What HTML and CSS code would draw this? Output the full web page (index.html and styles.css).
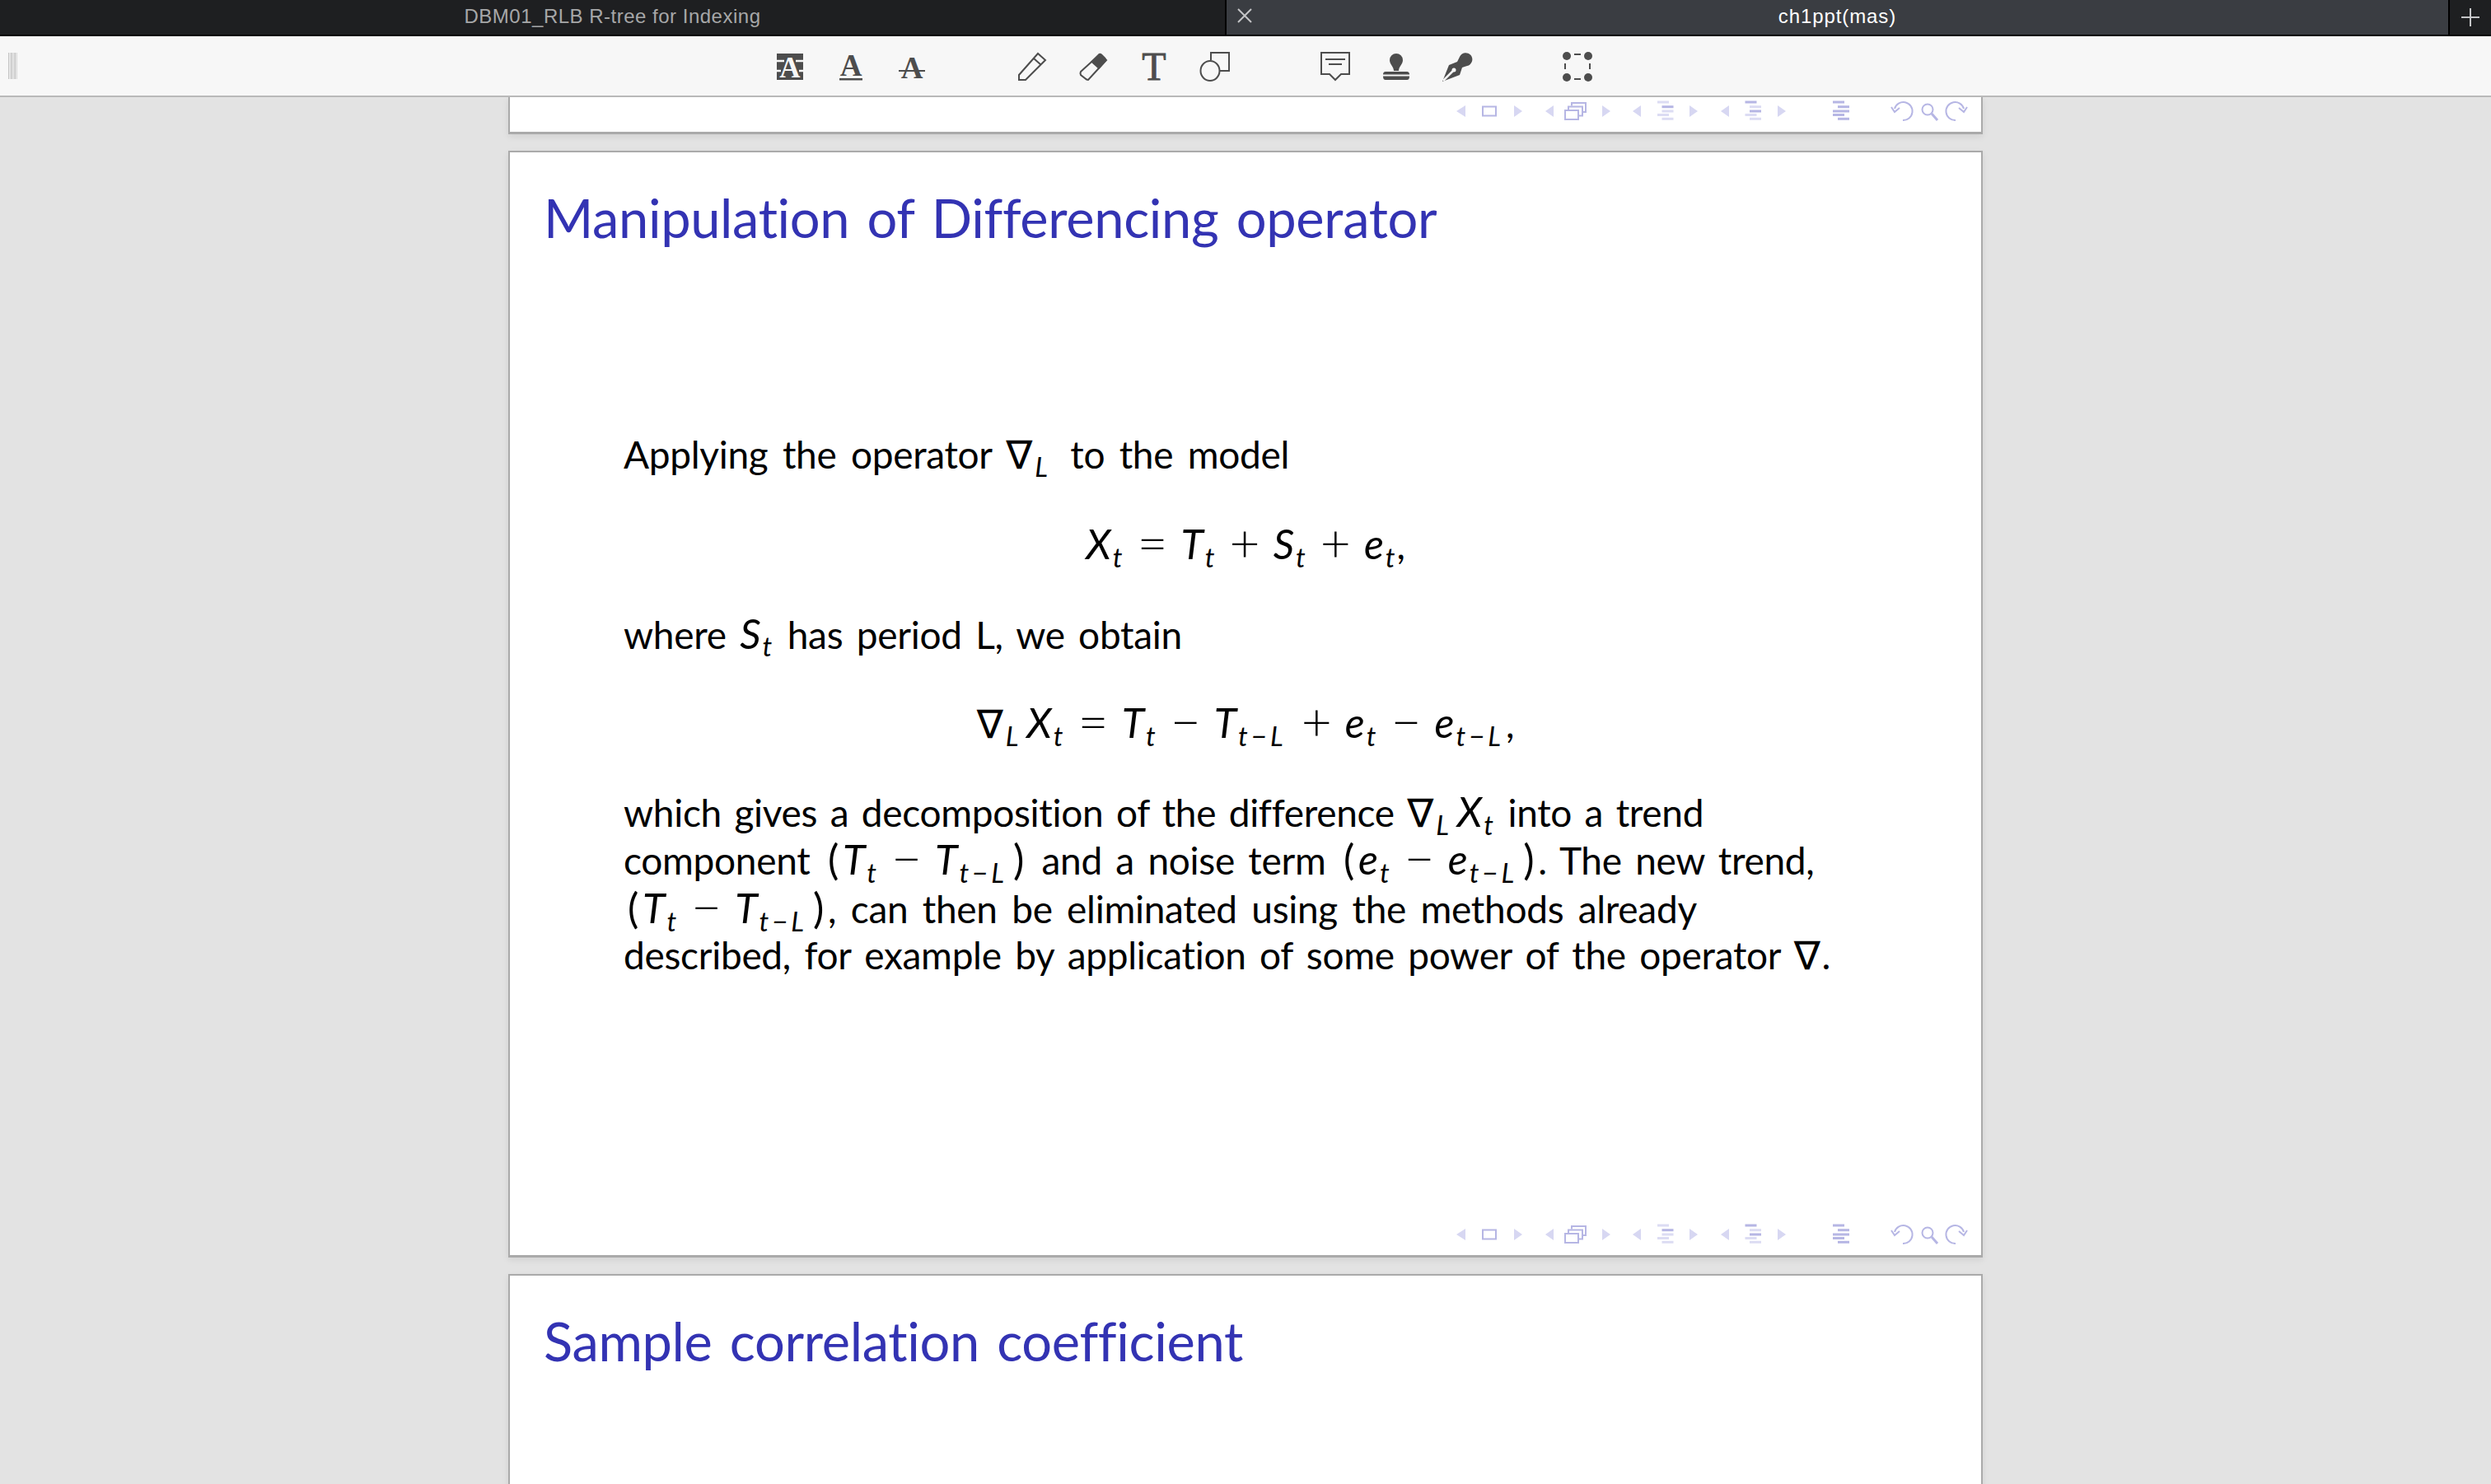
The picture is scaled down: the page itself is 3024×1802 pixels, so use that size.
FILE: index.html
```html
<!DOCTYPE html>
<html lang="en">
<head>
<meta charset="utf-8">
<title>ch1ppt(mas)</title>
<link rel="stylesheet" href="styles.css">
</head>
<body>
<svg class="defs" width="0" height="0" aria-hidden="true">
  <symbol id="nav" viewBox="0 0 630 30">
    <g class="tri">
      <polygon points="14,8 3,15 14,22"/><polygon points="73,8 83,15 73,22"/>
      <polygon points="121,8 111,15 121,22"/><polygon points="180,8 190,15 180,22"/>
      <polygon points="227,8 217,15 227,22"/><polygon points="286,8 296,15 286,22"/>
      <polygon points="334,8 324,15 334,22"/><polygon points="393,8 403,15 393,22"/>
    </g>
    <g class="ln">
      <rect x="35" y="9.5" width="16" height="11"/>
      <rect x="135" y="14" width="16" height="11"/>
      <path d="M139 13V9.5H156V20.5H152"/>
      <path d="M143 8.500V5H160V16H157"/>
    </g>
    <g class="bl">
      <rect x="247" y="2.500" width="14" height="3"/><rect x="247" y="18" width="14" height="3"/>
      <rect x="252.500" y="13.500" width="14" height="3"/><rect x="252.500" y="22.800" width="14" height="3"/>
      <rect x="353.500" y="18" width="14" height="3"/><rect x="359" y="8.200" width="14" height="3"/><rect x="359" y="22.800" width="14" height="3"/>
    </g>
    <g class="bd">
      <rect x="252.500" y="8.200" width="14" height="3"/>
      <rect x="353.500" y="2.500" width="14" height="3"/><rect x="359" y="13.500" width="14" height="3"/>
      <rect x="460" y="2.500" width="14" height="3"/><rect x="466" y="8.200" width="14" height="3"/><rect x="460" y="13.500" width="20" height="3"/><rect x="460" y="18" width="14" height="3"/><rect x="466" y="22.800" width="14" height="3"/>
    </g>
    <g class="ln">
      <path d="M535 12A11 11 0 1 1 545 26M531 10L535 16L541 11"/>
      <circle cx="575" cy="13" r="6.500"/><path class="thick" d="M580 18L587 26"/>
      <path d="M619 12A11 11 0 1 0 609 26M623 10L619 16L613 11"/>
    </g>
  </symbol>
</svg>

<header class="tabs">
  <div class="tab tab-off"><span>DBM01_RLB R-tree for Indexing</span></div>
  <div class="tab tab-on">
    <svg class="tab-close" width="18" height="18" viewBox="0 0 18 18"><path d="M1 1L17 17M17 1L1 17"/></svg>
    <span>ch1ppt(mas)</span>
  </div>
  <div class="tab-add">
    <svg width="24" height="24" viewBox="0 0 24 24"><path d="M12 1V23M1 12H23"/></svg>
  </div>
</header>

<nav class="toolbar">
  <div class="grip"></div>
  <div class="tool-group">
    <svg class="tool" viewBox="0 0 40 40">
      <rect class="f" x="4" y="4" width="32" height="32"/>
      <text class="glyph-a inv" x="20" y="33" font-size="35">A</text>
      <path class="w" d="M4 13H13M4 25H9M27 13H36M31 25H36"/>
    </svg>
    <svg class="tool" viewBox="0 0 40 40">
      <text class="glyph-a" x="20" y="31" font-size="37">A</text>
      <rect class="f" x="6" y="34" width="28" height="2.500"/>
    </svg>
    <svg class="tool" viewBox="0 0 40 40">
      <text class="glyph-a" x="20" y="34" font-size="37">A</text>
      <rect class="f" x="4" y="24" width="32" height="2"/>
    </svg>
  </div>
  <div class="tool-group">
    <svg class="tool" viewBox="0 0 40 40">
      <path class="s" d="M4 36V30L27 4L36 12L12 36ZM22 10L31 18"/>
    </svg>
    <svg class="tool" viewBox="0 0 40 40">
      <path class="s" d="M5 26L28 5L36 12L14 36Q12 36 10 34L5 30Q4 28 5 26Z"/>
      <path class="f" d="M17 14L27 4Q29 3 31 5L35 9Q37 11 36 13L27 23Z"/>
    </svg>
    <svg class="tool" viewBox="0 0 40 40">
      <text class="glyph-t" x="20" y="36" font-size="48">T</text>
    </svg>
    <svg class="tool" viewBox="0 0 40 40">
      <path class="s" d="M15 12V3H37V25H26"/>
      <ellipse class="s" cx="14" cy="25" rx="11.500" ry="12"/>
    </svg>
  </div>
  <div class="tool-group">
    <svg class="tool" viewBox="0 0 40 40">
      <path class="s" d="M3 3H37V29H27L20 36L13 29H3ZM8 11H32M12 17H28"/>
    </svg>
    <svg class="tool" viewBox="0 0 40 40">
      <path class="f" d="M20 4A8 8 0 0 1 28 12C28 17 23 20 23 25H17C17 20 12 17 12 12A8 8 0 0 1 20 4Z"/>
      <path class="f" d="M7 26H33Q36 26 36 29.500H4Q4 26 7 26ZM4 31.500H36Q36 36 33 36H7Q4 36 4 31.500Z"/>
    </svg>
    <svg class="tool" viewBox="0 0 40 40">
      <path class="f" d="M2 38L10 18L20 14L23 8A8 8 0 1 1 32 19L26 21L23 30Z"/>
      <circle class="hole" cx="16" cy="24" r="2.500"/>
      <path class="w" d="M3 37L15 25"/>
    </svg>
  </div>
  <div class="tool-group">
    <svg class="tool" viewBox="0 0 40 40">
      <circle class="f" cx="7" cy="7" r="5"/><circle class="f" cx="33" cy="7" r="5"/>
      <circle class="f" cx="7" cy="33" r="5"/><circle class="f" cx="33" cy="33" r="5"/>
      <path class="s" d="M16 5H24M16 35H24M5 16V23M35 16V23"/>
    </svg>
  </div>
</nav>

<main class="viewer">
  <section class="slide slide-tail">
    <svg class="beamer-nav"><use href="#nav"/></svg>
  </section>

  <section class="slide">
    <h1 class="slide-title">Manipulation of Differencing operator</h1>
    <div class="slide-body">
      <p class="line ws-6">Applying the operator <span class="nabla">∇</span><sub class="i ll">L</sub> to the model</p>
      <p class="line eq"><span class="i">X</span><sub class="i">t</sub><span class="op">=</span><span class="i">T</span><sub class="i">t</sub><span class="op">+</span><span class="i">S</span><sub class="i">t</sub><span class="op">+</span><span class="i">e</span><sub class="i">t</sub>,</p>
      <p class="line">where <span class="i">S</span><sub class="i">t</sub> has period L, we obtain</p>
      <p class="line eq"><span class="nabla">∇</span><sub class="i ll">L</sub><span class="i">X</span><sub class="i">t</sub><span class="op">=</span><span class="i">T</span><sub class="i">t</sub><span class="op">−</span><span class="i">T</span><sub class="i sl">t−L</sub><span class="op">+</span><span class="i">e</span><sub class="i">t</sub><span class="op">−</span><span class="i">e</span><sub class="i sl">t−L</sub>,</p>
      <div class="para">
        <p class="line ws-4">which gives a decomposition of the difference <span class="nabla">∇</span><sub class="i ll">L</sub><span class="i">X</span><sub class="i">t</sub> into a trend</p>
        <p class="line">component <span class="pa">(</span><span class="i">T</span><sub class="i">t</sub><span class="op">−</span><span class="i">T</span><sub class="i sl">t−L</sub><span class="pa">)</span> and a noise term <span class="pa">(</span><span class="i">e</span><sub class="i">t</sub><span class="op">−</span><span class="i">e</span><sub class="i sl">t−L</sub><span class="pa">)</span>. The new trend,</p>
        <p class="line ws-6"><span class="pa">(</span><span class="i">T</span><sub class="i">t</sub><span class="op">−</span><span class="i">T</span><sub class="i sl">t−L</sub><span class="pa">)</span>, can then be eliminated using the methods already</p>
        <p class="line">described, for example by application of some power of the operator <span class="nabla">∇</span>.</p>
      </div>
    </div>
    <svg class="beamer-nav"><use href="#nav"/></svg>
  </section>

  <section class="slide slide-head">
    <h1 class="slide-title">Sample correlation coefficient</h1>
  </section>
</main>
</body>
</html>
```
FILE: styles.css
```css
* { box-sizing: border-box; }
html, body { margin: 0; height: 100%; }
body {
  display: flex;
  flex-direction: column;
  height: 1802px;
  overflow: hidden;
  background: #e3e3e3;
  font-family: "Lato", "DejaVu Sans", sans-serif;
  font-variant-ligatures: none;
}
.defs { display: block; height: 0; }

/* tabs */
.tabs {
  display: flex;
  height: 44px;
  flex: none;
  background: #000;
  padding-bottom: 2px;
  font-family: "Liberation Sans", sans-serif;
  font-size: 24px;
}
.tab {
  display: flex;
  align-items: center;
  justify-content: center;
  width: 1487px;
  padding-bottom: 2px;
  position: relative;
}
.tab-off { background: #1e1f21; color: #a6a7a8; margin-right: 2px; letter-spacing: .5px; }
.tab-on { background: #3a3d42; color: #fff; width: 1483px; letter-spacing: .9px; }
.tab-close {
  position: absolute;
  left: 13px;
  top: 10px;
  stroke: #c4c5c7;
  stroke-width: 2;
  fill: none;
}
.tab-add {
  flex: 1;
  margin-left: 2px;
  background: #1e1f21;
  display: flex;
  align-items: center;
  justify-content: center;
  stroke: #c4c5c7;
  stroke-width: 2;
  fill: none;
}

/* toolbar */
.toolbar {
  display: flex;
  align-items: center;
  gap: 72px;
  flex: none;
  height: 74px;
  padding-top: 2px;
  background: #f7f7f7;
  border-bottom: 2px solid #b9b9b9;
  position: relative;
  padding-left: 922px;
}
.grip {
  position: absolute;
  left: 10px;
  top: 20px;
  width: 11px;
  height: 32px;
  background: repeating-linear-gradient(90deg, #c4c4c4 0 1px, #ececec 1px 2px, #dadada 2px 4px);
}
.tool-group { display: flex; }
.tool {
  width: 74px;
  height: 40px;
  flex: none;
  overflow: visible;
}
.tool .f { fill: #4d4d4d; }
.tool .s { fill: none; stroke: #4d4d4d; stroke-width: 2; }
.tool .w { fill: none; stroke: #f7f7f7; stroke-width: 2.500; }
.tool .hole { fill: #f7f7f7; }
.glyph-a {
  font-family: "Liberation Serif", serif;
  font-weight: 700;
  text-anchor: middle;
  fill: #4d4d4d;
}
.glyph-a.inv { fill: #f7f7f7; }
.glyph-t {
  font-family: "Liberation Serif", serif;
  text-anchor: middle;
  fill: #4d4d4d;
  stroke: #4d4d4d;
  stroke-width: .8;
}

/* slides */
.viewer {
  flex: 1;
  min-height: 0;
  overflow: hidden;
  display: flex;
  flex-direction: column;
  align-items: center;
  gap: 20px;
}
.slide {
  flex: none;
  display: flex;
  flex-direction: column;
  width: 1790px;
  height: 1344px;
  background: #fff;
  border: 2px solid #aaa;
  border-bottom-width: 3px;
  box-shadow: 0 3px 8px rgba(0, 0, 0, .08);
}
.slide-tail {
  height: 45px;
  border-top: 0;
}
.slide-head { height: 400px; border-bottom: 0; }
.slide-title {
  margin: 0;
  padding: 37px 0 0 41px;
  font-size: 65px;
  line-height: 84px;
  font-weight: 400;
  letter-spacing: -.35px;
  word-spacing: 5px;
  color: #3333b3;
  white-space: nowrap;
}
.slide-body {
  display: flex;
  flex-direction: column;
  gap: 50px;
  margin-top: 217px;
  padding-left: 138px;
  font-size: 46px;
  letter-spacing: -.3px;
  word-spacing: 5px;
  color: #000;
}
.line {
  margin: 0;
  height: 58.300px;
  line-height: 58.300px;
  white-space: nowrap;
}
.ws-4 { word-spacing: 4px; }
.ws-6 { word-spacing: 6px; }
.eq {
  text-align: center;
  margin-left: -138px;
}
.i { font-style: italic; font-size: 50px; letter-spacing: 0; margin-right: 1px; }
sub.i {
  font-size: 33px;
  line-height: 0;
  vertical-align: -.3em;
  margin: 0 2px 0 1px;
}
sub.sl { letter-spacing: 4px; }
sub.ll { margin-right: 10px; }
.op {
  font-size: 64px;
  font-weight: 300;
  letter-spacing: 0;
  line-height: 0;
  margin: 0 16px;
  vertical-align: -3px;
}
.pa { margin: 0 5px; font-size: 50px; }
.nabla { font-family: "DejaVu Sans", sans-serif; font-size: 48px; margin-right: 2px; }
.beamer-nav {
  width: 630px;
  height: 30px;
  flex: none;
  margin-top: auto;
  margin-bottom: 10px;
  margin-left: 1146px;
}
.tri { fill: #d7d7f2; }
.ln { fill: none; stroke: #b6b6e4; stroke-width: 2; }
.thick { stroke-width: 3; }
.bl { fill: #dcdcf3; }
.bd { fill: #b6b6e4; }
```
